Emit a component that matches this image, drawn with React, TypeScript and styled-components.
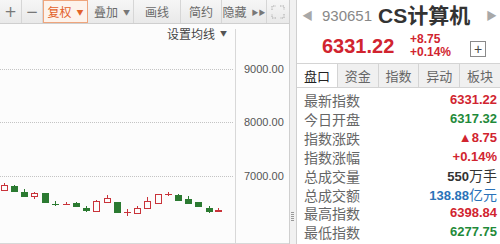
import React from "react";
import styled, { createGlobalStyle } from "styled-components";

const GlobalStyle = createGlobalStyle`
  html, body { margin: 0; padding: 0; background: #fff; }
  body {
    font-family: "Liberation Sans", "Noto Sans CJK SC", sans-serif;
    width: 500px;
    height: 244px;
    overflow: hidden;
  }
`;

const CJK = `"Noto Sans CJK SC", "Liberation Sans", sans-serif`;

const Page = styled.div`
  display: flex;
  width: 500px;
  height: 244px;
  background: #fff;
`;

const LeftPanel = styled.div`
  display: flex;
  flex-direction: column;
  width: 289px;
  height: 243px;
  border-bottom: 1px solid #d8d8d8;
  background: #fcfcfc;
`;

const Toolbar = styled.div`
  display: flex;
  height: 24px;
  flex-shrink: 0;
  background: linear-gradient(#f6f6f6, #e9e9e9);
  border-bottom: 1px solid #cfcfcf;
  box-sizing: border-box;
`;

const ToolButton = styled.div<{ $w: number; $active?: boolean; $last?: boolean }>`
  display: flex;
  align-items: center;
  justify-content: center;
  gap: 5px;
  width: ${(p) => p.$w}px;
  height: 100%;
  box-sizing: border-box;
  font-family: ${CJK};
  font-size: 12px;
  color: ${(p) => (p.$active ? "#e2622a" : "#6a6a6a")};
  border-right: ${(p) => (p.$last ? "none" : "1px solid #d6d6d6")};
  ${(p) =>
    p.$active
      ? `background: #fdf3ec; border: 1px solid #efa57c; margin-right: 3px;`
      : ""}
`;

const Glyph = styled.span`
  font-family: "DejaVu Sans", sans-serif;
  font-size: 15px;
  color: #777;
`;

const Caret = styled.span<{ $color?: string }>`
  font-size: 7px;
  color: ${(p) => p.$color || "#777"};
`;

const ChartArea = styled.div`
  display: flex;
  flex: 1;
  min-height: 0;
`;

const PlotColumn = styled.div`
  display: flex;
  flex-direction: column;
  width: 235px;
`;

const PlotHeader = styled.div`
  display: flex;
  justify-content: flex-end;
  align-items: center;
  gap: 5px;
  height: 18px;
  flex-shrink: 0;
  padding-right: 8px;
  font-family: ${CJK};
  font-size: 12px;
  color: #444;
`;

const Axis = styled.div`
  width: 53px;
  margin-top: 5px;
  border-left: 1px solid #d8d8d8;
`;

const Splitter = styled.div`
  position: relative;
  width: 6px;
  height: 244px;
  background: #f1f1f1;
  border-left: 1px solid #cfcfcf;
  border-right: 1px solid #cfcfcf;
`;

const Grip = styled.div`
  position: absolute;
  left: 1px;
  top: 212px;
  width: 3px;
  height: 10px;
  background: repeating-linear-gradient(#999 0 1px, transparent 1px 2px);
`;

const RightPanel = styled.div`
  display: flex;
  flex-direction: column;
  flex: 1;
  height: 244px;
  overflow: hidden;
`;

const TitleRow = styled.div`
  display: flex;
  align-items: center;
  height: 30px;
  flex-shrink: 0;
  padding: 0 3px 0 5px;
`;

const Arrow = styled.span`
  font-size: 11px;
  color: #a8a8a8;
`;

const Code = styled.span`
  margin-left: 9px;
  font-size: 15px;
  color: #888;
`;

const Name = styled.span`
  margin-left: 6px;
  font-family: "Liberation Sans", "Noto Sans CJK SC", sans-serif;
  font-size: 21px;
  font-weight: bold;
  color: #333;
  flex: 1;
  line-height: 1;
`;

const PriceRow = styled.div`
  display: flex;
  align-items: center;
  height: 32px;
  flex-shrink: 0;
  padding-left: 25px;
`;

const BigPrice = styled.span`
  font-size: 20px;
  font-weight: bold;
  color: #d1242f;
  width: 88px;
`;

const ChangeBox = styled.div`
  display: flex;
  flex-direction: column;
  width: 60px;
  font-size: 12px;
  font-weight: bold;
  line-height: 13px;
  color: #d1242f;
`;

const AddButton = styled.div`
  display: flex;
  align-items: center;
  justify-content: center;
  width: 14px;
  height: 14px;
  margin-top: 6px;
  border: 1px solid #8a8a8a;
  font-size: 14px;
  color: #444;
  line-height: 1;
`;

const Tabs = styled.div`
  display: flex;
  height: 23px;
  flex-shrink: 0;
  margin-top: 1px;
  border-top: 1px solid #d4d4d4;
  border-bottom: 1px solid #d4d4d4;
  background: #f0f0f0;
`;

const Tab = styled.div<{ $active?: boolean }>`
  display: flex;
  align-items: center;
  justify-content: center;
  flex: 1;
  font-family: ${CJK};
  font-size: 13px;
  color: ${(p) => (p.$active ? "#222" : "#666")};
  background: ${(p) => (p.$active ? "#fff" : "transparent")};
  border-right: 1px solid #d4d4d4;
  &:last-child { border-right: none; }
`;

const InfoList = styled.div`
  display: flex;
  flex-direction: column;
  padding: 3px 3px 0 7px;
`;

const InfoRow = styled.div`
  display: flex;
  align-items: center;
  justify-content: space-between;
  height: 18.85px;
`;

const Label = styled.span`
  font-family: ${CJK};
  font-size: 14px;
  line-height: 18px;
  color: #666;
`;

const Value = styled.span<{ $color: string }>`
  font-family: "Liberation Sans", "Noto Sans CJK SC", sans-serif;
  font-size: 13px;
  line-height: 18px;
  font-weight: bold;
  color: ${(p) => p.$color};
`;

const Unit = styled.span`
  font-family: ${CJK};
  font-size: 14px;
  font-weight: normal;
`;

const RED = "#d1242f";
const GREEN = "#1f8a3a";

type Candle = [number, number, number, number, number, "r" | "g"];

const candles: Candle[] = [
  [4, 185, 190, 183, 191, "r"],
  [14, 186, 191, 185, 192, "g"],
  [24, 192, 196, 189, 196, "g"],
  [34, 193, 196, 192, 199, "r"],
  [45, 193, 202, 193, 203, "g"],
  [55, 204, 204, 201, 206, "g"],
  [66, 204, 204, 202, 205, "r"],
  [76, 203, 206, 202, 207, "g"],
  [86, 208, 210, 206, 212, "g"],
  [96, 201, 211, 200, 211, "r"],
  [107, 198, 202, 195, 202, "r"],
  [117, 202, 212, 202, 213, "g"],
  [127, 212, 212, 209, 216, "r"],
  [137, 208, 213, 206, 213, "r"],
  [147, 201, 208, 197, 208, "r"],
  [158, 194, 203, 194, 204, "r"],
  [168, 194, 194, 192, 196, "r"],
  [178, 195, 200, 194, 201, "g"],
  [188, 199, 203, 196, 203, "g"],
  [198, 202, 206, 202, 207, "g"],
  [209, 208, 211, 206, 213, "g"],
  [218, 210, 211, 208, 212, "r"],
];

const gridLines = [69, 122, 176];
const axisLabels = [
  { y: 69, t: "9000.00" },
  { y: 122, t: "8000.00" },
  { y: 176, t: "7000.00" },
];

const Plot = () => (
  <svg width={235} height={200} viewBox="0 42 235 200" style={{ display: "block" }}>
    {gridLines.map((y) => (
      <line key={y} x1={0} x2={233} y1={y + 0.5} y2={y + 0.5} stroke="#c4c4c4" strokeDasharray="1 1" />
    ))}
    {candles.map(([x, bt, bb, wt, wb, k], i) => {
      const color = k === "r" ? "#c9333a" : "#2b7a31";
      const doji = bb - bt < 1;
      return (
        <g key={i}>
          <line x1={x + 0.5} x2={x + 0.5} y1={wt} y2={wb} stroke={color} />
          {doji ? (
            <line x1={x - 3} x2={x + 4} y1={bt + 0.5} y2={bt + 0.5} stroke={color} />
          ) : (
            <rect
              x={x - 2.5}
              y={bt + 0.5}
              width={6}
              height={bb - bt}
              fill={k === "r" ? "#fcfcfc" : color}
              stroke={color}
            />
          )}
        </g>
      );
    })}
  </svg>
);

const AxisLabels = () => (
  <svg width={53} height={213} viewBox="236 29 53 213" style={{ display: "block" }}>
    {axisLabels.map((a) => (
      <text key={a.t} x={244} y={a.y + 4} fontSize={11} fill="#555" fontFamily="Liberation Sans, sans-serif">
        {a.t}
      </text>
    ))}
  </svg>
);

const FullscreenIcon = () => (
  <svg width={14} height={14} viewBox="0 0 14 14" fill="none" stroke="#aaa" strokeWidth={1}>
    <path d="M1 5V1h4M9 1h4v4M13 9v4H9M5 13H1V9" strokeDasharray="1.5 1" />
  </svg>
);

const rows = [
  { label: "最新指数", value: "6331.22", color: RED },
  { label: "今日开盘", value: "6317.32", color: GREEN },
  { label: "指数涨跌", value: "▲8.75", color: RED },
  { label: "指数涨幅", value: "+0.14%", color: RED },
  { label: "总成交量", value: "550", unit: "万手", color: "#333" },
  { label: "总成交额", value: "138.88", unit: "亿元", color: "#2a72b8" },
  { label: "最高指数", value: "6398.84", color: RED },
  { label: "最低指数", value: "6277.75", color: GREEN },
];

const tabs = ["盘口", "资金", "指数", "异动", "板块"];

export default function App() {
  return (
    <Page>
      <GlobalStyle />
      <LeftPanel>
        <Toolbar>
          <ToolButton $w={22}><Glyph>+</Glyph></ToolButton>
          <ToolButton $w={21}><Glyph>−</Glyph></ToolButton>
          <ToolButton $w={45} $active>复权<Caret $color="#e2622a">▼</Caret></ToolButton>
          <ToolButton $w={43}>叠加<Caret>▼</Caret></ToolButton>
          <ToolButton $w={47}>画线</ToolButton>
          <ToolButton $w={41}>简约</ToolButton>
          <ToolButton $w={45}>隐藏<Caret>▶▶</Caret></ToolButton>
          <ToolButton $w={22} $last><FullscreenIcon /></ToolButton>
        </Toolbar>
        <ChartArea>
          <PlotColumn>
            <PlotHeader>设置均线<Caret $color="#555">▼</Caret></PlotHeader>
            <Plot />
          </PlotColumn>
          <Axis><AxisLabels /></Axis>
        </ChartArea>
      </LeftPanel>
      <Splitter><Grip /></Splitter>
      <RightPanel>
        <TitleRow>
          <Arrow>◀</Arrow>
          <Code>930651</Code>
          <Name>CS计算机</Name>
          <Arrow>▶</Arrow>
        </TitleRow>
        <PriceRow>
          <BigPrice>6331.22</BigPrice>
          <ChangeBox>
            <span>+8.75</span>
            <span>+0.14%</span>
          </ChangeBox>
          <AddButton>+</AddButton>
        </PriceRow>
        <Tabs>
          {tabs.map((t, i) => (
            <Tab key={t} $active={i === 0}>{t}</Tab>
          ))}
        </Tabs>
        <InfoList>
          {rows.map((r) => (
            <InfoRow key={r.label}>
              <Label>{r.label}</Label>
              <Value $color={r.color}>
                {r.value}
                {r.unit && <Unit>{r.unit}</Unit>}
              </Value>
            </InfoRow>
          ))}
        </InfoList>
      </RightPanel>
    </Page>
  );
}
